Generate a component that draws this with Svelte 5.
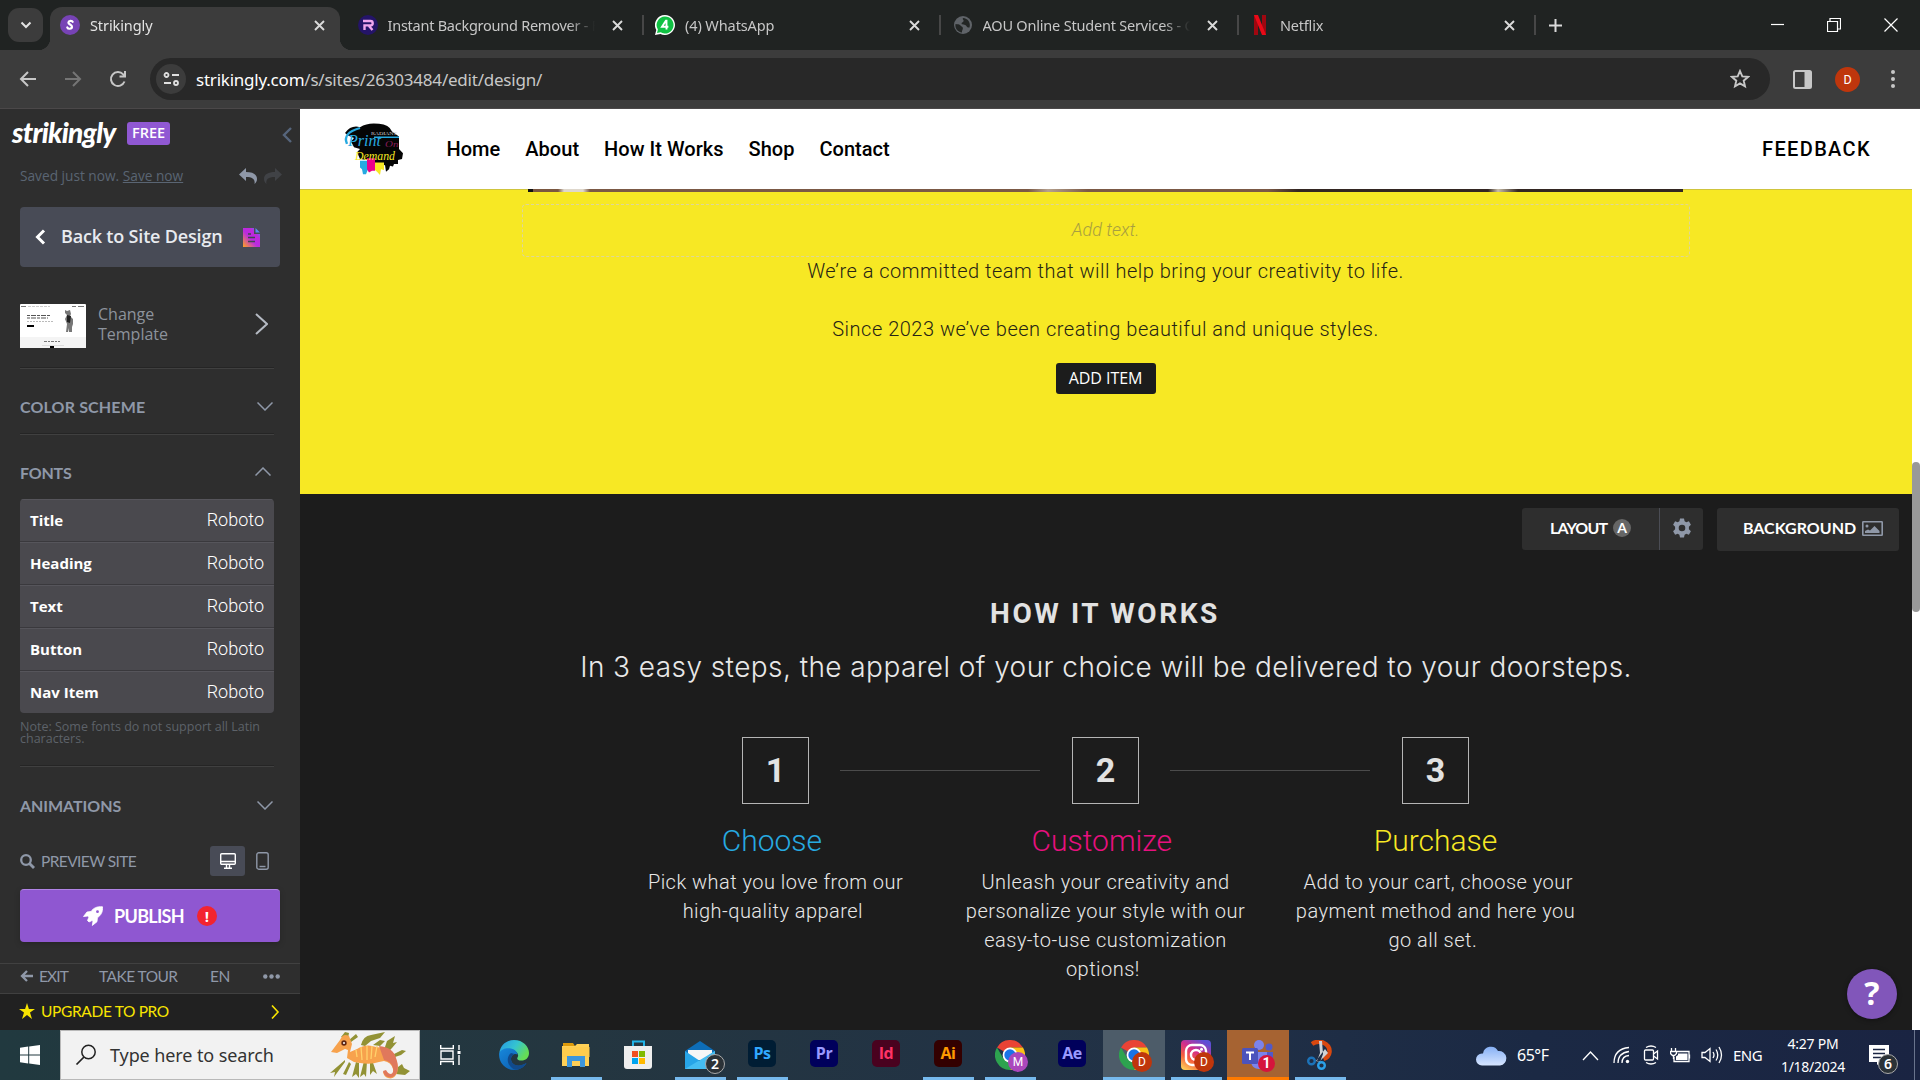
<script>
  const tabs = [
    { title: 'Strikingly', icon: 'strikingly', ls: -0.1 },
    { title: 'Instant Background Remover - F', icon: 'remover', ls: -0.25 },
    { title: '(4) WhatsApp', icon: 'whatsapp', ls: -0.1 },
    { title: 'AOU Online Student Services - C', icon: 'globe', ls: -0.2 },
    { title: 'Netflix', icon: 'netflix', ls: -0.2 },
  ];
  const fonts = ['Title', 'Heading', 'Text', 'Button', 'Nav Item'];
  const links = ['Home', 'About', 'How It Works', 'Shop', 'Contact'];
  const steps = [
    { n: 1, name: 'Choose\u00a0', tone: 'cyan', lines: ['Pick what you love from our', 'high-quality apparel\u00a0'] },
    { n: 2, name: 'Customize\u00a0', tone: 'pink', lines: ['Unleash your creativity and', 'personalize your style with our', 'easy-to-use customization', 'options!\u00a0'] },
    { n: 3, name: 'Purchase', tone: 'lemon', lines: ['\u00a0Add to your cart, choose your', 'payment method and here you', 'go all set.\u00a0'] },
  ];
  const apps = [
    { id: 'edge' },
    { id: 'explorer', open: true },
    { id: 'store' },
    { id: 'mail', open: true, badge: '2', kind: 'count' },
    { id: 'adobe', label: 'Ps', tone: 'ps', open: true },
    { id: 'adobe', label: 'Pr', tone: 'pr' },
    { id: 'adobe', label: 'Id', tone: 'ind' },
    { id: 'adobe', label: 'Ai', tone: 'ai', open: true },
    { id: 'chrome', open: true, badge: 'M', kind: 'violet' },
    { id: 'adobe', label: 'Ae', tone: 'pr' },
    { id: 'chrome', open: true, state: 'active', badge: 'D', kind: 'rust' },
    { id: 'instagram', open: true, badge: 'D', kind: 'rust' },
    { id: 'teams', open: true, state: 'alert', badge: '1', kind: 'red' },
    { id: 'snip', open: true },
  ];
</script>

{#snippet chevron(cls, d, w, h)}
  <svg class={cls} width={w} height={h} viewBox="0 0 {w} {h}"><path {d} /></svg>
{/snippet}

<div class="screen">
  <div class="strip">
    <div class="finder">
      <svg width="12" height="8" viewBox="0 0 12 8"><path d="M1.5 1.5 6 6l4.500-4.500" fill="none" stroke="#e3e3e3" stroke-width="2" /></svg>
    </div>
    <div class="tabs">
      {#each tabs as tab, i}
        <div class="tab" class:current={i === 0}>
          <span class="fav">
            {#if tab.icon === 'strikingly'}
              <svg width="20" height="20" viewBox="0 0 20 20"><circle cx="10" cy="10" r="10" fill="#7743b5" /><path d="M12.700 6.800c-.5-1.300-3.900-1.600-4.300.6-.3 2 3.800 2.300 3.600 4.500-.2 2.300-3.900 2.400-4.700.6" fill="none" stroke="#fff" stroke-width="2.200" stroke-linecap="round" /></svg>
            {:else if tab.icon === 'remover'}
              <svg width="20" height="20" viewBox="0 0 20 20"><circle cx="10" cy="10" r="10" fill="#241468" /><path d="M5 6h7.500q2.200 0 2.200 2.200t-2.200 2.200H6.500V15M11 11l3.500 4" fill="none" stroke="#f0a6ee" stroke-width="2.400" /></svg>
            {:else if tab.icon === 'whatsapp'}
              <svg width="20" height="20" viewBox="0 0 20 20"><path d="M10 0a10 10 0 1 1-4.600 18.900L0 20l1.300-5A10 10 0 0 1 10 0Z" fill="#fff" /><path d="M10 1.500a8.500 8.500 0 1 1-4.300 15.800L2 18l.9-3.500A8.500 8.500 0 0 1 10 1.500Z" fill="#10c143" /><path d="M11.500 14.500V5.800h-.6L7 11.700h6.400" fill="none" stroke="#fff" stroke-width="1.900" /></svg>
            {:else if tab.icon === 'globe'}
              <svg width="20" height="20" viewBox="0 0 20 20"><circle cx="10" cy="10" r="9" fill="#5f6368" /><path d="M2.500 9c2 .4 4 0 5 1.500s2.400 1 2.400 2.800-1.200 2-.9 4.200c-4.300-.5-7.200-4-6.500-8.500ZM10 3c-1 1.800 1.500 2 .4 3.500-.9 1.300-2 .9-1.800 2.200.3 1.500 3.600.4 4.600 2 .8 1.400 1.500 2 3.300 1.700 1.500-4.500-1.700-9.200-6.500-9.400Z" fill="#232625" /></svg>
            {:else}
              <svg width="20" height="20" viewBox="0 0 20 20"><path d="M4 0h4v20H4zM12 0h4v20h-4z" fill="#a00710" /><path d="M4 0h4l8 20h-4Z" fill="#ea0a18" /></svg>
            {/if}
          </span>
          <span class="title" style:letter-spacing="{tab.ls}px">{tab.title}</span>
          <svg class="x" width="11" height="11" viewBox="0 0 11 11"><path d="m1 1 9 9m0-9-9 9" /></svg>
          <i></i>
        </div>
      {/each}
    </div>
    <svg class="plus" width="13" height="13" viewBox="0 0 13 13"><path d="M6.500 0v13M0 6.500h13" stroke="#dadada" stroke-width="2" /></svg>
    <div class="window">
      <svg width="14" height="14" viewBox="0 0 14 14"><path d="M1 6.500h13" /></svg>
      <svg width="14" height="14" viewBox="0 0 14 14"><path d="M.5 3.500h10v10H.5zM3 3V.5h10.500V11H11" /></svg>
      <svg width="14" height="14" viewBox="0 0 14 14"><path d="m.5.5 13 13m0-13-13 13" /></svg>
    </div>
  </div>

  <div class="toolbar">
    <div class="history">
      <svg width="20" height="20" viewBox="0 0 20 20"><path d="M18 10H3.500M10 3l-7 7 7 7" stroke="#c7c7c7" /></svg>
      <svg width="20" height="20" viewBox="0 0 20 20"><path d="M2 10h14.500M10 3l7 7-7 7" stroke="#757575" /></svg>
      <svg width="20" height="20" viewBox="0 0 20 20"><path d="M16.500 12.500a7 7 0 1 1-1.300-7.200l1.300 1.500M17 2v5.500h-5.500" stroke="#c7c7c7" /></svg>
    </div>
    <div class="omnibox">
      <span class="site"><svg width="17" height="14" viewBox="0 0 17 14"><path d="M9 3h7M1 11h7" /><circle cx="3.500" cy="3" r="2" /><circle cx="13" cy="11" r="2" /></svg></span>
      <span class="url"><b>strikingly.com</b>/s/sites/26303484/edit/design/</span>
      <svg class="star" width="20" height="20" viewBox="0 0 20 20"><path d="m10 2 2.300 5.400 5.700.5-4.300 3.800 1.300 5.700-5-3-5 3 1.300-5.700L2 7.900l5.700-.5Z" fill="none" stroke="#c7c7c7" stroke-width="1.900" /></svg>
    </div>
    <svg class="panel" width="19" height="19" viewBox="0 0 19 19"><rect x="1" y="1" width="17" height="17" rx="1.500" fill="none" stroke="#c7c7c7" stroke-width="2" /><path d="M11.500 1H18v17h-6.500z" fill="#c7c7c7" /></svg>
    <span class="avatar">D</span>
    <svg class="dots" width="4" height="18" viewBox="0 0 4 18"><circle cx="2" cy="2" r="2" /><circle cx="2" cy="9" r="2" /><circle cx="2" cy="16" r="2" /></svg>
  </div>

  <div class="page">
    <aside>
      <div class="brand">
        <span class="wordmark">strikingly</span>
        <span class="free">FREE</span>
        {@render chevron('collapse', 'M9 1 2 8l7 7', 11, 16)}
      </div>
      <div class="saved">
        <span>Saved just now. <u>Save now</u></span>
        <svg width="18" height="16" viewBox="0 0 18 16"><path d="M0 6.500 7 0v4c6.500 0 11 2 11 7 0 2-.9 3.800-2.500 5 .8-4.500-1.500-7-8.500-7v4Z" fill="#8f98a8" /></svg>
        <svg width="18" height="16" viewBox="0 0 18 16"><path d="M18 6.500 11 0v4C4.500 4 0 6 0 11c0 2 .9 3.800 2.500 5C1.700 11.500 4 9 11 9v4Z" fill="#404246" /></svg>
      </div>
      <div class="back">
        {@render chevron('prev', 'M9 1.500 2.500 8 9 14.500', 11, 16)}
        <span>Back to Site Design</span>
        <svg width="17" height="19" viewBox="0 0 17 19"><defs><linearGradient id="doc" x1="0" y1="1" x2="1" y2="0"><stop offset="0" stop-color="#ffa51c" /><stop offset=".45" stop-color="#b92be0" /><stop offset=".7" stop-color="#c028dc" /><stop offset="1" stop-color="#2f9cf5" /></linearGradient></defs><path d="M0 0h11v6h6v13H0Z" fill="url(#doc)" /><path d="m12.500 0 4.500 4.500h-4.500z" fill="#5b8df0" /><path d="M5 6h3M5 9.500h7M5 13.500h7" stroke="#414450" stroke-width="1.700" /></svg>
      </div>
      <div class="template">
        <svg width="66" height="44" viewBox="0 0 66 44"><rect width="66" height="44" rx="1" fill="#fff" /><path d="M0 33h66v11H0z" fill="#f4f4f4" /><path d="M1 2.500h5M52 2.500h4M58 2.500h6" stroke="#777" stroke-width="1" /><path d="M8 2.500h22" stroke="#ccc" stroke-dasharray="3 1" /><path d="M7 11.500h24M7 14h21" stroke="#555" stroke-width="1.200" stroke-dasharray="3 1 5 1" /><path d="M7 17.500h26" stroke="#bbb" stroke-dasharray="2 1" /><path d="M7 22h7" stroke="#000" stroke-width="2" /><path d="m45 6 2 1 3-1 1 4-1 2 3 3v5l-1 3v5h-3v-4l-1 4h-2l1-8-2-5 2-4-2-2Z" fill="#777" /><path d="m47 11 4 1-1 7-3-1Z" fill="#222" /><path d="M24 37.500h16" stroke="#777" stroke-dasharray="3 1 2 1" /><path d="M22 41.500h22" stroke="#ddd" /><path d="M30 43h4" stroke="#000" stroke-width="2" /></svg>
        <span>Change<br />Template</span>
        {@render chevron('next', 'm1 1 11 10L1 21', 13, 22)}
      </div>
      <div class="section color"><span>COLOR SCHEME</span>{@render chevron('fold', 'm.5.5 7.500 7.500L15.500.5', 16, 9)}</div>
      <div class="section type"><span>FONTS</span>{@render chevron('fold', 'M.5 8.500 8 1l7.500 7.500', 16, 9)}</div>
      <div class="fonts">
        {#each fonts as name}
          <div><b>{name}</b><span>Roboto</span></div>
        {/each}
      </div>
      <p class="note">Note: Some fonts do not support all Latin<br />characters.</p>
      <div class="section motion"><span>ANIMATIONS</span>{@render chevron('fold', 'm.5.5 7.500 7.500L15.500.5', 16, 9)}</div>
      <div class="preview">
        <svg width="15" height="15" viewBox="0 0 15 15"><circle cx="6" cy="6" r="4.800" fill="none" stroke="#8f98a8" stroke-width="2.300" /><path d="m9.500 9.500 4.500 4.500" stroke="#8f98a8" stroke-width="2.800" /></svg>
        <span>PREVIEW SITE</span>
        <span class="desktop"><svg width="16" height="16" viewBox="0 0 16 16"><rect x=".7" y=".7" width="14.600" height="10.600" rx="1" /><path d="M1 8.500h14M6.500 11.500V15M9.500 11.500V15M4 15.200h8" /></svg></span>
        <svg class="phone" width="13" height="18" viewBox="0 0 13 18"><rect x=".8" y=".8" width="11.400" height="16.400" rx="2" /><path d="M3.500 14.500h6" /></svg>
      </div>
      <div class="publish">
        <svg width="20" height="20" viewBox="0 0 20 20"><path d="M19.500.8C14 .2 10.500 2 8 5.500L4 6 .5 10.500 5 10l1 1-1.500 3.500L6 16l3-1.500 1 .8L9.300 19.500 14 15.700l.4-4c3.500-2.400 5.500-5.600 5.100-10.900Z" fill="#fff" stroke="#fff" stroke-linejoin="round" stroke-width=".8" /><circle cx="14.500" cy="5.700" r="1.400" fill="#8f57d1" /></svg>
        <span>PUBLISH</span>
        <em>!</em>
      </div>
      <div class="links">
        <svg width="13" height="12" viewBox="0 0 13 12"><path d="M13 6H2M7 1 2 6l5 5" fill="none" stroke="#8f98a8" stroke-width="2.300" /></svg>
        <span class="exit">EXIT</span><span class="tour">TAKE TOUR</span><span class="lang">EN</span>
        <svg width="17" height="5" viewBox="0 0 17 5" fill="#8f98a8"><circle cx="2.300" cy="2.500" r="2.200" /><circle cx="8.500" cy="2.500" r="2.200" /><circle cx="14.700" cy="2.500" r="2.200" /></svg>
      </div>
      <div class="upgrade">
        <svg width="16" height="16" viewBox="0 0 16 16"><path d="m8 0 1.900 5.900H16l-5 3.700L13 16l-5-3.900L3 16l2-6.400-5-3.700h6.100Z" fill="#f8e500" /></svg>
        <span>UPGRADE TO PRO</span>
        {@render chevron('go', 'm1 .5 6 6.500-6 6.500', 9, 14)}
      </div>
    </aside>

    <main>
      <header>
        <svg class="logo" width="60" height="52" viewBox="0 0 60 62" preserveAspectRatio="none">
          <path d="M2 12Q8 2 17 5 25-1 36 1q10 1 13 9l7 6 0 15 4 5-1 7-4 1v5h-4l-1 3-3-1-1 4-3 3-1-8-5 2-4-4-9-4-7-1-3-8 3-4-6-2-3-7 3-4-6-3Z" fill="#050505" />
          <path d="M17 45h8v10l-2 6h-3l-1-6-2-2Z" fill="#27aae1" /><path d="M24 42h8v15h-3l-3 2-2-4Z" fill="#ec008c" /><path d="M32 47h9v9l-3-1-1 7-3-4-2-2Z" fill="#f7e824" />
          <text x="5" y="28" font-size="21" fill="#27aae1" font-style="italic" font-weight="400" textLength="33" lengthAdjust="spacingAndGlyphs">Print</text>
          <path d="M4 25Q-1 12 17 6" fill="none" stroke="#27aae1" stroke-width="2.400" /><path d="M31 17h25" stroke="#27aae1" stroke-width="1.800" />
          <text x="28" y="14" font-size="6" fill="#ccc" textLength="26">RADIANT</text>
          <text x="42" y="29" font-size="11" fill="#8a1d5a" font-style="italic">On</text>
          <text x="12" y="44" font-size="16" fill="#f7e824" font-style="italic" font-weight="400" textLength="40" lengthAdjust="spacingAndGlyphs">Demand</text>
        </svg>
        <nav>{#each links as link}<span>{link}</span>{/each}</nav>
        <span class="feedback">FEEDBACK</span>
      </header>
      <div class="canvas">
        <div class="content">
          <section class="about">
            <div class="photo"></div>
            <div class="slot">Add text.</div>
            <p class="team">We’re a committed team that will help bring your creativity to life.</p>
            <p class="since">Since 2023 we’ve been creating beautiful and unique styles.</p>
            <span class="add">ADD ITEM</span>
          </section>
          <section class="how">
            <div class="tools">
              <div class="layout"><span>LAYOUT</span><em>A</em></div>
              <div class="gear"><svg width="20" height="20" viewBox="0 0 20 20"><path d="M8 .5h4l.6 2.700 1.700 1 2.600-.9 2 3.500-2 1.900v2.600l2 1.900-2 3.500-2.600-.9-1.700 1-.6 2.700H8l-.6-2.700-1.700-1-2.600.9-2-3.500 2-1.900V8.700l-2-1.900 2-3.500 2.600.9 1.700-1Zm2 6.200a3.300 3.300 0 1 0 0 6.600 3.300 3.300 0 0 0 0-6.600Z" fill="#8f98a8" fill-rule="evenodd" /></svg></div>
              <div class="bg"><span>BACKGROUND</span><svg width="21" height="15" viewBox="0 0 21 15"><rect x=".8" y=".8" width="19.400" height="13.400" rx=".5" fill="none" stroke="#8f98a8" stroke-width="1.600" /><circle cx="5" cy="5" r="1.500" fill="#8f98a8" /><path d="M3 12V10l3-1.500 2 1L12.500 5l5 5v2Z" fill="#8f98a8" /></svg></div>
            </div>
            <h2>HOW IT WORKS</h2>
            <h3>In 3 easy steps, the apparel of your choice will be delivered to your doorsteps.</h3>
            <div class="numbers">
              {#each steps as s, i}
                {#if i}<hr />{/if}
                <b>{s.n}</b>
              {/each}
            </div>
            <div class="steps">
              {#each steps as s}
                <div>
                  <h4 class={s.tone}>{s.name}</h4>
                  {#each s.lines as line}<p>{line}</p>{/each}
                </div>
              {/each}
            </div>
          </section>
        </div>
        <div class="scroll"><div></div></div>
      </div>
      <span class="help">?</span>
    </main>
  </div>

  <footer>
    <div class="start"><svg width="20" height="20" viewBox="0 0 20 20"><path d="M0 2.800 8.200 1.600v8H0ZM9.200 1.500 20 0v9.600H9.200ZM0 10.500h8.200v8L0 17.300ZM9.200 10.500H20V20L9.200 18.500Z" fill="#fff" /></svg></div>
    <div class="search">
      <svg width="22" height="22" viewBox="0 0 22 22"><circle cx="13.500" cy="8" r="6.700" fill="none" stroke="#222" stroke-width="1.500" /><path d="M9 13 1.500 20.500" stroke="#222" stroke-width="1.700" /></svg>
      <span>Type here to search</span>
      <svg class="dragon" width="84" height="48" viewBox="0 0 84 48">
        <g fill="#929235"><path d="m14 6 4-5 4 1-1 5ZM22 9l7-6 2 3-7 5ZM34 14q2-9 10-10l14-3-5 6-9 3-6 5ZM46 14l7-5 5 1-5 5ZM57 19l3-9 8-5-2 7 4-1-5 6-5 5ZM63 25l12-6 4 1-5 4-9 3ZM18 29 3 42l5-1-1 5 11-15ZM22 31l-6 12 3 1 5-11ZM29 31l-4 15 4-3 3 4 0-15ZM37 30l-4 16 4-3 2 3 1-16ZM43 29l0 15 3-4 4 3-5-14ZM71 36l4-3 2 4 6 3-5 4-9-1Z" /></g>
        <path d="M4 21 13 9q3-7 9-4l3 8-2 8 7-3q9-6 19-2l8 1q10 2 12 11 3 8 1 14-3 7-9 5-4-1-5-6l3-1q2 4 5 4 3-1 2-6-2-7-9-8l-5 1q-8 3-19 1l-6-1-7-4 1-8-3-1-8 4Z" fill="#f7a24d" />
        <path d="M52 15q14 1 17 12 3 8 1 14-3 7-9 5-4-1-5-6l3-1q2 4 5 4 3-1 2-6-2-7-9-8Z" fill="#e0785c" /><path d="m29 19 1 7m4-10 1 13m5-14 0 14m5-14-1 13m6-13-2 11" stroke="#ffd26c" stroke-width="1.300" /><circle cx="17" cy="12" r="2.700" fill="#612713" /><circle cx="17" cy="12" r="1" fill="#fff" />
      </svg>
    </div>
    <div class="view"><svg width="21" height="20" viewBox="0 0 21 20"><path d="M.7 0v3.500h12.600V0M.7 20v-3.500h12.600V20M1 6h12v8H1zM19 0v5M19 10v10" fill="none" stroke="#fff" stroke-width="1.400" /><path d="M17.500 6h3v3h-3z" fill="#fff" /></svg></div>
    <div class="apps">
      {#each apps as app}
        <div class="app {app.state ?? ''}" class:open={app.open}>
          {#if app.id === 'edge'}
            <svg width="30" height="30" viewBox="0 0 30 30"><defs><linearGradient id="e1" x1="0" y1="0" x2="1" y2=".5"><stop offset="0" stop-color="#2496e6" /><stop offset=".55" stop-color="#35c4d0" /><stop offset="1" stop-color="#65dc55" /></linearGradient><linearGradient id="e2" x1="0" y1="0" x2="1" y2="1"><stop offset="0" stop-color="#1788dc" /><stop offset="1" stop-color="#0b57a8" /></linearGradient></defs><path d="M.3 13C1.500 5 7.500 0 15 0c9 0 15 6.500 15 13 0 5-3.500 7.500-7.500 7.500-3.500 0-5-1.500-4-3 2-3-1-7-5.500-7C7 10.500 2 11 .3 13Z" fill="url(#e1)" /><path d="M.2 13C2.500 8.500 8 7.500 12 8.500c4.500 1 6.500 4 6.500 6-2-1.500-6.500 0-6.500 4.500 0 6 7 9.500 15.500 4C24 28.500 19 30 15 30 6 30-.8 22 .2 13Z" fill="url(#e2)" /><path d="M12 13c-5 4-4.500 12 3 16.500 5 .8 10-2 12.500-6.500C19 28 12 24.500 12 19c0-2.500 1.500-4.500 3.500-5Z" fill="#114a8b" /></svg>
          {:else if app.id === 'explorer'}
            <svg width="28" height="24" viewBox="0 0 28 24"><path d="M1 0h10l2 3H1z" fill="#dd9a0b" /><path d="M0 3h13l2-2h12v22H0Z" fill="#ffd056" /><path d="M0 4h28v10H0z" fill="#ffc843" opacity=".5" /><path d="M5 13h18v11h-5v-6h-8v6H5Z" fill="#3d96dc" /></svg>
          {:else if app.id === 'store'}
            <svg width="28" height="30" viewBox="0 0 28 30"><path d="M9 6V1.500h11V6" fill="none" stroke="#21b4e8" stroke-width="2" /><path d="M0 6h28v20q0 3-3 3H3q-3 0-3-3Z" fill="#eee" /><path d="M8 11h6v6H8z" fill="#f25022" /><path d="M15 11h6v6h-6z" fill="#7fba00" /><path d="M8 18h6v6H8z" fill="#00a4ef" /><path d="M15 18h6v6h-6z" fill="#ffb900" /></svg>
          {:else if app.id === 'mail'}
            <svg width="30" height="28" viewBox="0 0 30 28"><path d="M0 10 15 0l15 10v3H0z" fill="#0d6db8" /><path d="M3 9h24v10H3z" fill="#f6f6f6" /><path d="M0 10l15 10 15-10v18H0z" fill="#27a5e8" /><path d="M0 28 30 10v18z" fill="#45bdf2" /></svg>
          {:else if app.id === 'adobe'}
            <span class="adobe {app.tone}">{app.label}</span>
          {:else if app.id === 'chrome'}
            <svg width="30" height="30" viewBox="0 0 30 30"><path d="M15 15 2 7.500A15 15 0 0 1 28 7.500H15Z" fill="#e94335" /><path d="M15 15l6.500 3.800L15 30A15 15 0 0 0 28 7.500H15Z" fill="#fbc116" /><path d="m15 15-6.500 3.800L2 7.500A15 15 0 0 0 15 30l6.500-11.200Z" fill="#2da34f" /><circle cx="15" cy="15" r="7.400" fill="#fff" /><circle cx="15" cy="15" r="5.700" fill="#1a73e8" /></svg>
          {:else if app.id === 'instagram'}
            <svg width="30" height="30" viewBox="0 0 30 30"><defs><linearGradient id="ig" x1=".1" y1="1" x2=".7" y2="0"><stop offset="0" stop-color="#ffd35a" /><stop offset=".35" stop-color="#f55d3c" /><stop offset=".65" stop-color="#d12d8d" /><stop offset="1" stop-color="#5b50d6" /></linearGradient></defs><rect width="30" height="30" rx="4" fill="url(#ig)" /><g fill="none" stroke="#fff" stroke-width="2.400"><rect x="5" y="5" width="20" height="20" rx="6" /><circle cx="15" cy="15" r="5" /></g><circle cx="20.500" cy="9.300" r="1.500" fill="#fff" /></svg>
          {:else if app.id === 'teams'}
            <svg width="32" height="30" viewBox="0 0 32 30"><circle cx="17" cy="5" r="5" fill="#7b83eb" /><circle cx="27" cy="7" r="3.500" fill="#5059c9" /><path d="M21 12h10v8q-1 6-8 6Z" fill="#5059c9" /><path d="M10 12h15v10q-1 7-8 7t-8-7Z" fill="#7b83eb" /><rect y="8" width="16" height="16" rx="1.500" fill="#4b53bc" /><path d="M4 12.500h8M8 12.500V20" stroke="#fff" stroke-width="2" /></svg>
          {:else}
            <svg width="26" height="30" viewBox="0 0 26 30"><path d="M5 4Q10 .5 16 2.500q7 3 6.500 9.500-.5 5-6 7" fill="none" stroke="#d9480f" stroke-width="4.500" /><path d="m12 1 3 0 1 13-3 8-3-1 3-8ZM18 9l-9 12 3 1 9-9Z" fill="#cfd3d6" /><circle cx="4.500" cy="21" r="3.300" fill="none" stroke="#1c73b9" stroke-width="2.400" /><circle cx="14.500" cy="25.500" r="3.300" fill="none" stroke="#2ba0e8" stroke-width="2.400" /></svg>
          {/if}
          {#if app.badge}<span class="badge {app.kind}">{app.badge}</span>{/if}
        </div>
      {/each}
    </div>
    <div class="tray">
      <svg class="cloud" width="31" height="21" viewBox="0 0 31 21"><defs><linearGradient id="cl" x1="0" y1="0" x2="0" y2="1"><stop offset="0" stop-color="#86b0f5" /><stop offset="1" stop-color="#d6e5ff" /></linearGradient></defs><path d="M6 20.500a6 6 0 0 1 0-12h1a8 8 0 0 1 15-2.500 7 7 0 0 1 2 14.500Z" fill="url(#cl)" /></svg>
      <span class="temp">65°F</span>
      <svg class="t1" width="17" height="11" viewBox="0 0 17 11"><path d="M1 10 8.500 2l7.500 8" /></svg>
      <svg class="t2" width="17" height="18" viewBox="0 0 17 18"><path d="M1 17Q1 3 16 1.500M5 17Q5 7 16 5.500M9 17q0-7 7-7.500" /><circle cx="14.500" cy="15.500" r="1.700" class="solid" /></svg>
      <svg class="t3" width="16" height="20" viewBox="0 0 16 20"><rect x="1.500" y="5" width="9" height="10" rx="1" /><path d="m10.500 9 4-3v8l-4-3M3 2.500Q8-.5 13 2.500M3 17.500q5 3 10 0" /></svg>
      <svg class="t4" width="21" height="15" viewBox="0 0 21 15"><path d="M6 3.500h13v10H4V9M19.500 6.500v4M1.500 0v3M5.500 0v3M.5 3.500h6v2l-2 2h-2l-2-2ZM3.500 8v3" /><path class="solid" d="M8 5.500h9.500v6.500H6V8.500L8 7z" /></svg>
      <svg class="t5" width="22" height="18" viewBox="0 0 22 18"><path d="M1 6.500h3l5-4v13l-5-4H1ZM12 6q2 3 0 6M15 3.500q3.500 5.500 0 11M18 1q5 8 0 16" /></svg>
      <span class="lang">ENG</span>
      <span class="clock">4:27 PM<br />1/18/2024</span>
      <div class="note">
        <svg width="20" height="20" viewBox="0 0 20 20"><path d="M0 0h20v17h-8l-4 3v-3H0Z" class="solid" /><path d="M4 4.500h12M4 8.500h12M4 12.500h8" class="rule" /></svg>
        <span class="badge count">6</span>
      </div>
      <i></i>
    </div>
  </footer>
</div>

<style>
  :global(body) { margin: 0; overflow: hidden; }
  .screen, .screen :global(*) { box-sizing: border-box; }
  .screen { width: 1920px; height: 1080px; display: flex; flex-direction: column; font-family: 'Open Sans', sans-serif; background: #1c1c1c; }
  svg { display: block; flex: none; }
  span, b, p { white-space: nowrap; }
  p, h2, h3, h4 { margin: 0; }

  .strip { height: 50px; flex: none; display: flex; background: #202322; padding-left: 8px; align-items: flex-start; position: relative; z-index: 1; }
  .finder { width: 35px; height: 34px; margin: 8px 7px 0 0; border-radius: 11px; background: #3c3c3c; display: flex; align-items: center; justify-content: center; }
  .tabs { display: flex; height: 50px; }
  .tab { position: relative; width: 297.5px; height: 50px; padding: 0 0 0 10px; display: flex; align-items: center; }
  .fav { width: 20px; margin-right: 10px; }
  .title { width: 212px; overflow: hidden; font: 14.500px 'Noto Sans', sans-serif; line-height: 20px; color: #c7c7c7; -webkit-mask-image: linear-gradient(90deg, #000 180px, transparent 207px); mask-image: linear-gradient(90deg, #000 180px, transparent 207px); }
  .x { margin-left: 12px; stroke: #dadada; stroke-width: 1.900; }
  .tab i { width: 2px; height: 20px; background: #474747; margin-left: 19px; }
  .current { z-index: 1; }
  .current::before { content: ''; position: absolute; z-index: -1; left: 0; top: 7px; width: 290px; height: 43px; border-radius: 12px 12px 0 0; background: #3c3c3c; }
  .current::after { content: ''; position: absolute; left: -12px; bottom: 0; width: 314px; height: 12px; background: radial-gradient(circle at 0 0, transparent 12px, #3c3c3c 12.500px) left / 12px 12px no-repeat, radial-gradient(circle at 100% 0, transparent 12px, #3c3c3c 12.500px) right / 12px 12px no-repeat; }
  .current .title { color: #e3e3e3; }
  .current i { visibility: hidden; }
  .plus { margin: 19px 0 0 11px; }
  .window { margin: 18px 22px 0 auto; display: flex; gap: 43px; fill: none; stroke: #fff; stroke-width: 1.200; }

  .toolbar { height: 59px; flex: none; display: flex; align-items: center; background: #3c3c3c; border-bottom: 1px solid #4b4849; padding-left: 18px; }
  .history { display: flex; gap: 25px; width: 132px; fill: none; stroke-width: 2; }
  .omnibox { width: 1620px; height: 42px; border-radius: 21px; background: #282828; display: flex; align-items: center; padding-left: 6px; }
  .site { width: 30px; height: 30px; border-radius: 50%; background: #3c3c3c; display: flex; align-items: center; justify-content: center; fill: none; }
  .site svg { stroke: #e0e0e0; stroke-width: 1.800; }
  .url { margin-left: 10px; font: 17px 'Noto Sans', sans-serif; color: #c7c7c7; letter-spacing: -0.220px; }
  .url b { font-weight: 400; color: #fff; }
  .star { margin: 0 20px 0 auto; }
  .panel { margin-left: 23px; }
  .avatar { width: 25px; height: 25px; border-radius: 50%; background: #bf360c; margin-left: 23px; color: #fff; font: 12.500px/25px Roboto, sans-serif; text-align: center; }
  .dots { margin-left: 31px; fill: #c7c7c7; }

  .page { height: 921px; display: flex; }
  aside { width: 300px; background: #2e2e2e; color: #8f98a8; display: flex; flex-direction: column; flex: none; }
  .brand { height: 53px; padding: 0 7px 0 12px; display: flex; align-items: center; }
  .wordmark { font: italic 900 28px/30px Lato, sans-serif; color: #fff; width: 115px; letter-spacing: -0.700px; margin-top: -7px; }
  .free { width: 43px; height: 23px; border-radius: 3px; background: #9058d3; color: #fff; font-weight: 600; font-size: 14.500px; line-height: 22px; text-align: center; margin-top: -5px; }
  .collapse { margin: -1px 0 0 auto; fill: none; stroke: #56657c; stroke-width: 2.400; }
  .saved { height: 28px; padding: 0 18px 0 20px; display: flex; align-items: center; color: #5a6573; font-size: 13.700px; gap: 7px; }
  .saved span { flex: 1; margin-top: -1px; }
  .back { margin: 17px 20px 0; height: 60px; border-radius: 4px; background: #484b56; display: flex; align-items: center; padding: 0 20px 0 15px; color: #e8ebf0; font-weight: 600; font-size: 18px; flex: none; }
  .back span { margin: -3px auto 0 15px; letter-spacing: -0.180px; }
  .prev { fill: none; stroke: #fff; stroke-width: 3; }
  .template { height: 101px; padding: 16px 32px 0 20px; display: flex; align-items: center; flex: none; font-size: 16px; line-height: 20px; color: #8d939c; }
  .template span { margin: -4px auto 0 12px; }
  .next { fill: none; stroke: #b5bac3; stroke-width: 2; margin-top: -4px; }
  .section { margin: 0 26px 0 20px; flex: none; border-top: 1px solid #404040; box-shadow: 0 -1px #252525; display: flex; align-items: center; justify-content: space-between; font: 700 16px Lato, sans-serif; letter-spacing: 0.150px; }
  .fold { fill: none; stroke: #8f98a8; stroke-width: 1.500; margin-right: 1px; }
  .color { height: 66px; padding-top: 10px; }
  .type { height: 65px; padding-top: 11px; letter-spacing: -0.200px; }
  .type .fold { margin: -2px 3px 0 0; }
  .motion { height: 66px; margin-top: 21px; padding-top: 12px; letter-spacing: -0.050px; }
  .fonts { width: 254px; margin-left: 20px; border-radius: 4px; background: #4a494e; overflow: hidden; flex: none; height: 214px; }
  .fonts div { height: 43px; padding: 0 10px; display: flex; align-items: center; justify-content: space-between; border-top: 1px solid #56555b; border-bottom: 1px solid #3a393d; color: #fff; }
  .fonts b { font-size: 15px; margin-top: -2px; }
  .fonts span { font: 300 18px Roboto, sans-serif; margin-top: -3px; }
  .note { margin: 8px 0 0 20px; font-size: 12.500px; line-height: 12px; color: #5d6269; height: 24px; }
  .preview { height: 30px; margin: 14px 31px 0 20px; display: flex; align-items: center; font: 15.500px Lato, sans-serif; flex: none; }
  .preview > span:nth-child(2) { margin: -1px auto 0 6px; letter-spacing: -0.600px; }
  .desktop { width: 35px; height: 30px; border-radius: 3px; background: #484b56; display: flex; align-items: center; justify-content: center; margin-right: 11px; }
  .desktop svg { fill: none; stroke: #fff; stroke-width: 1.400; }
  .phone { fill: none; stroke: #8f98a8; stroke-width: 1.400; }
  .publish { margin: 13px 20px 0; height: 53px; border-radius: 4px; background: #8f57d1; border-top: 1px solid #b184e6; display: flex; align-items: center; justify-content: center; color: #fff; font: 700 18px Lato, sans-serif; box-shadow: 0 2px 6px #0003; flex: none; }
  .publish span { margin: 0 13px 0 11px; letter-spacing: -0.700px; }
  .publish em { width: 20px; height: 20px; border-radius: 50%; background: #f3242f; font: 700 15px/20px 'Open Sans', sans-serif; text-align: center; }
  .links { margin-top: 21px; height: 31px; border-top: 1px solid #414141; border-bottom: 1px solid #404040; padding: 0 20px 5px; display: flex; align-items: center; font: 15.500px Lato, sans-serif; flex: none; }
  .exit { margin-left: 6px; width: 60px; letter-spacing: -0.900px; }
  .tour { width: 111px; letter-spacing: -0.550px; }
  .links .lang { margin-right: auto; letter-spacing: -0.500px; }
  .upgrade { flex: 1; background: #212121; color: #f8e500; display: flex; align-items: center; padding: 0 20px 3px 19px; font: 15.500px Lato, sans-serif; letter-spacing: -0.350px; }
  .upgrade span { margin-left: 6px; }
  .go { margin: 2px 0 0 auto; fill: none; stroke: #f8e500; stroke-width: 1.600; }

  main { flex: 1; display: flex; flex-direction: column; position: relative; }
  header { height: 80px; flex: none; background: #fff; display: flex; align-items: center; padding: 0 49px 0 43px; color: #000; font-family: Roboto, sans-serif; font-weight: 500; font-size: 20px; }
  .logo { font-family: 'Liberation Serif', serif; }
  nav { display: flex; gap: 25px; margin-left: 43.500px; letter-spacing: 0.030px; }
  .feedback { margin-left: auto; letter-spacing: 1.350px; font-size: 20px; }
  .canvas { flex: 1; display: flex; }
  .content { width: 1612px; font-family: Roboto, sans-serif; display: flex; flex-direction: column; }
  .scroll { width: 8px; background: #fff; padding-top: 273px; }
  .scroll div { height: 150px; border-radius: 4px; background: #999; }
  .about { height: 305px; padding-right: 1px; background: #f7e824; border-top: 1px solid #cfc43c; display: flex; flex-direction: column; align-items: center; color: #262414; font-weight: 300; font-size: 20px; }
  .photo { width: 1155px; height: 3px; margin-top: -1px; background: linear-gradient(90deg, #111 0 5px, #7a5740 5px 30px, #ded7cc 36px 55px, #7b5945 62px 500px, #b5a18e 520px, #7b5945 560px 740px, #332622 770px 960px, #c8bda8 970px, #332622 990px); flex: none; }
  .slot { width: 1168px; height: 53px; margin-top: 12px; border: 1px dashed #ddd69a; border-radius: 4px; text-align: center; font-style: italic; font-size: 18px; line-height: 50px; color: #a89f40; flex: none; }
  .team { line-height: 28px; letter-spacing: 0.500px; }
  .since { line-height: 30px; margin-top: 29px; letter-spacing: 0.500px; }
  .add { width: 100px; height: 31px; margin-top: 19px; border-radius: 3px; background: #1c1c1c; color: #fff; font: 16px/31px 'Open Sans', sans-serif; letter-spacing: -0.050px; text-align: center; }
  .how { flex: 1; background: #1c1c1c; color: #e8e8e8; text-align: center; }
  .tools { display: flex; justify-content: flex-end; padding: 14px 13px 0 0; height: 57px; font: 700 16px Lato, sans-serif; color: #fff; }
  .tools > div { background: #2e2e2e; height: 42px; display: flex; align-items: center; padding-bottom: 2px; }
  .tools span { margin-top: -2px; }
  .tools .layout { width: 137px; padding-left: 28px; border-radius: 3px 0 0 3px; letter-spacing: -0.850px; }
  .layout em { width: 18px; height: 18px; border-radius: 50%; background: #666; font: 700 14px/18px Lato, sans-serif; margin-left: 6px; letter-spacing: 0; }
  .gear { width: 44px; border-left: 1px solid #4b4d55; justify-content: center; border-radius: 0 3px 3px 0; margin-right: 14px; }
  .tools .bg { width: 182px; height: 43px; padding: 0 16px 2px 26px; justify-content: space-between; border-radius: 3px; }
  h2 { font-weight: 700; font-size: 28px; line-height: 40px; letter-spacing: 2.600px; margin: 43px 2px 0 0; color: #e2e2e2; }
  h3 { font: 300 28px/40px Inter, sans-serif; margin-top: 13px; letter-spacing: 0.430px; }
  .numbers { display: flex; justify-content: center; margin-top: 50px; padding-right: 1px; }
  .numbers b { width: 67px; height: 67px; border: 1px solid #b5b5b5; font-size: 34px; line-height: 65px; color: #e2e2e2; }
  hr { width: 200px; height: 1px; border: 0; background: #4b4b4b; margin: 33px 32px 0 31px; }
  .steps { display: grid; grid-template-columns: repeat(3, 330px); justify-content: center; margin-top: 17px; padding-right: 1px; }
  h4 { font-weight: 300; font-size: 30px; line-height: 40px; margin-bottom: 7px; }
  .cyan { color: #27aae1; } .pink { color: #e8107f; } .lemon { color: #f7e824; }
  .steps p { font-size: 20px; font-weight: 300; line-height: 29px; letter-spacing: 0.470px; }
  .help { position: absolute; right: 23px; bottom: 11px; width: 50px; height: 50px; border-radius: 50%; background: #8156ba; color: #fff; font: 700 32px/48px 'Open Sans', sans-serif; text-align: center; box-shadow: 0 1px 5px #0006; }

  footer { height: 50px; display: flex; background: linear-gradient(90deg, #21393f, #243640 30%, #213146 60%, #1b2944 80%, #1a2442); font-family: 'Noto Sans', sans-serif; color: #fff; }
  .start { width: 60px; padding: 15px 0 0 20px; }
  .search { width: 360px; background: #f2f2f2; border: 1px solid #b9b9b9; display: flex; align-items: center; padding: 0 8px 0 14px; font-size: 18px; color: #333; }
  .search span { margin-left: 13px; letter-spacing: -0.100px; }
  .dragon { margin-left: auto; }
  .view { width: 63px; padding: 15px 0 0 20px; }
  .apps { display: flex; }
  .app { width: 62px; height: 50px; display: flex; align-items: center; justify-content: center; position: relative; }
  .open::after { content: ''; position: absolute; left: 6px; right: 5px; bottom: 0; height: 3px; background: #76b9ed; }
  .active, .alert { background: #4d5c69; }
  .alert { background: #a66332; }
  .active::after, .alert::after { left: 0; right: 0; }
  .alert::after { background: #ff7a00; }
  .adobe { width: 28px; height: 27px; border-radius: 5px; font: 700 16px/26px 'Open Sans', sans-serif; text-align: center; margin-top: -3px; letter-spacing: -0.500px; }
  .ps { background: #001d34; color: #31a8ff; } .pr { background: #00005b; color: #9999ff; } .ind { background: #49021f; color: #ff3366; } .ai { background: #330000; color: #ff9a00; }
  .badge { position: absolute; width: 20px; height: 20px; border-radius: 50%; left: 29px; top: 22px; font: 12px/20px Roboto, sans-serif; text-align: center; color: #fff; }
  .count { background: #2b3237; border: 1px solid #aaa; font: 600 14px/18px 'Noto Sans', sans-serif; top: 24px; left: 36px; }
  .violet { background: #ab47bc; } .rust { background: #bf360c; } .red { background: #d5143c; font-weight: 700; font-size: 14px; line-height: 17px; width: 17px; height: 17px; left: 31px; top: 25px; }
  .tray { margin-left: auto; width: 444px; height: 50px; display: flex; align-items: center; font-size: 15px; fill: none; stroke: none; }
  .tray svg:not(.cloud) { stroke: #fff; stroke-width: 1.300; }
  .tray .solid { fill: #fff; stroke: none; }
  .tray .rule { stroke: #1b2643; }
  .temp { margin: 0 31px 0 10px; width: 34px; font-size: 16px; letter-spacing: -0.500px; }
  .t2 { margin-left: 14px; } .t3 { margin-left: 13px; } .t4 { margin-left: 11px; } .t5 { margin-left: 10px; }
  .tray .lang { margin-left: 10px; width: 31px; letter-spacing: -0.500px; }
  .clock { margin-left: 14px; width: 70px; text-align: center; font-size: 14px; line-height: 23px; letter-spacing: -0.250px; }
  .tray .note { position: relative; margin: 0 0 0 21px; height: 20px; }
  .tray .note .badge { left: 9px; top: 9px; }
  .tray i { width: 1px; height: 50px; background: #69748c; margin-left: auto; margin-right: 5px; }
</style>
